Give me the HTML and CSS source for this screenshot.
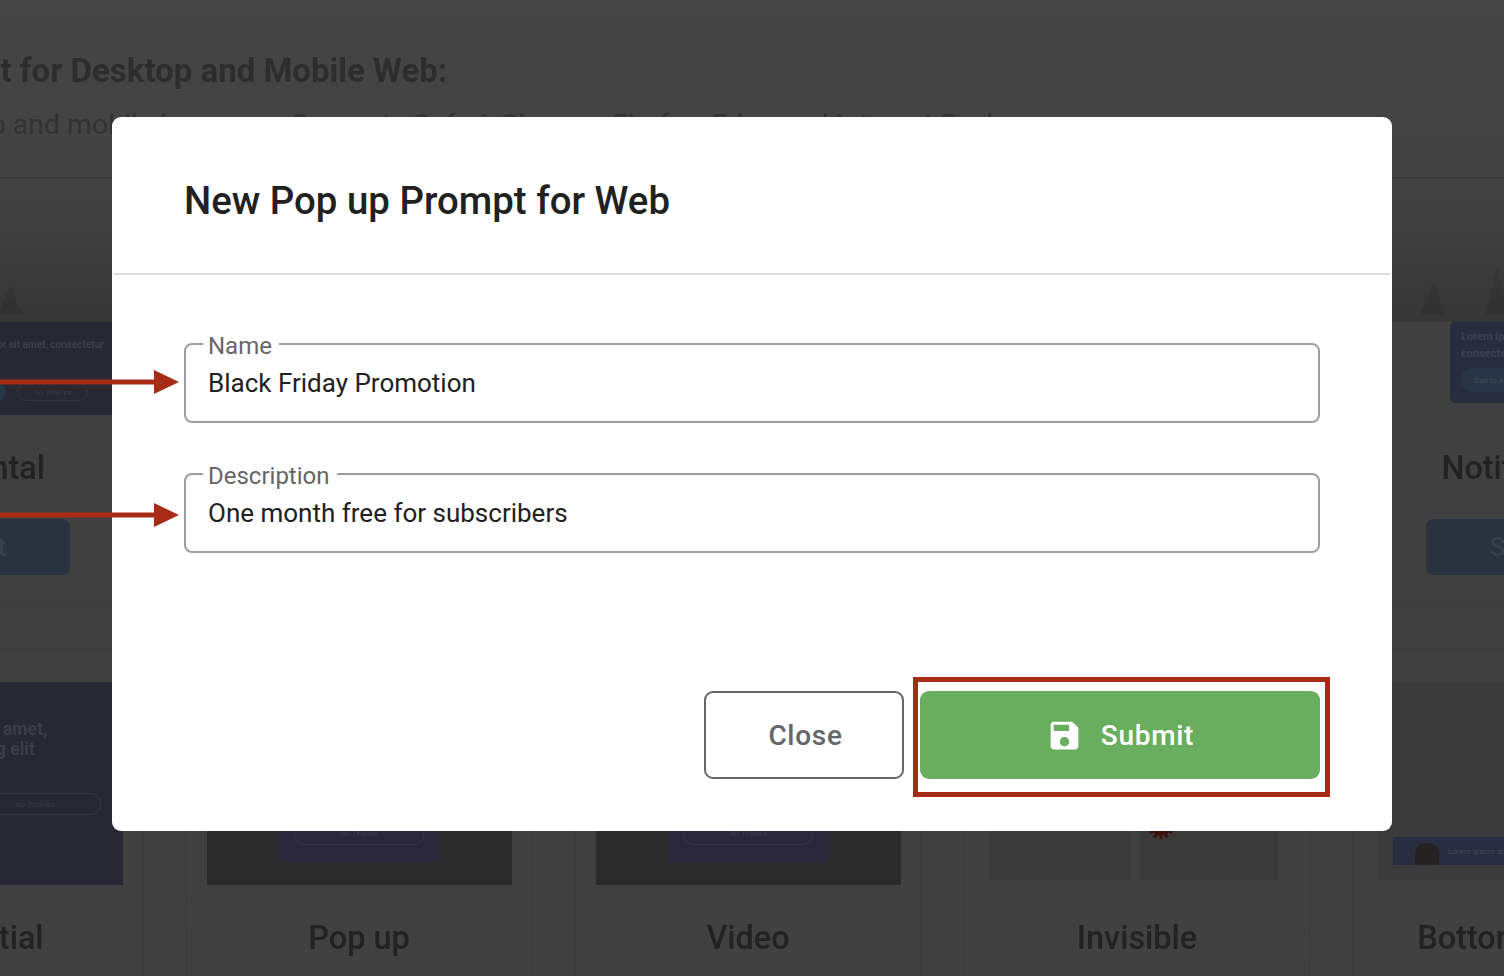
FILE: index.html
```html
<!DOCTYPE html>
<html lang="en">
<head>
<meta charset="utf-8">
<title>New Pop up Prompt for Web</title>
<link rel="stylesheet" href="styles.css">
</head>
<body>
<div class="page">
  <header class="intro">
    <h2 class="intro-title">Support for Desktop and Mobile Web:</h2>
    <p class="intro-sub">Works on desktop and mobile browsers. Supports Safari, Chrome, Firefox, Edge and Internet Explorer</p>
  </header>
  <section class="row row-top">
    <article class="card">
      <div class="scene"><span class="peak peak-a"></span></div>
      <div class="banner">
        <p class="banner-text">Lorem ipsum dolor sit amet, consectetur</p>
        <div class="banner-actions"><span class="pill pill-blue"></span><span class="pill">No Thanks</span></div>
      </div>
      <h3 class="card-title">Horizontal</h3>
      <div class="select-btn"><span>Select</span></div>
    </article>
    <article class="card"><div class="scene"></div></article>
    <article class="card"><div class="scene"></div></article>
    <article class="card"><div class="scene"></div></article>
    <article class="card">
      <div class="scene"><span class="peak peak-b"></span><span class="peak peak-c"></span></div>
      <div class="note">
        <p class="note-text">Lorem ipsum dolor<br>consectetur</p>
        <span class="note-cta">Call to Action</span>
      </div>
      <h3 class="card-title">Notification</h3>
      <div class="select-btn"><span>Select</span></div>
    </article>
  </section>
  <section class="row row-bottom">
    <article class="card">
      <div class="inter">
        <p class="inter-text">Lorem ipsum dolor sit amet,<br>consectetur adipiscing elit</p>
        <div class="inter-actions"><span class="pill pill-blue pill-half"></span><span class="pill pill-half">No Thanks</span></div>
      </div>
      <h3 class="card-title">Interstitial</h3>
    </article>
    <article class="card">
      <div class="dim"><div class="dim-box"><span class="pill pill-mid">No Thanks</span></div></div>
      <h3 class="card-title">Pop up</h3>
    </article>
    <article class="card">
      <div class="dim"><div class="dim-box"><span class="pill pill-mid">No Thanks</span></div></div>
      <h3 class="card-title">Video</h3>
    </article>
    <article class="card">
      <div class="panels"><div class="panel"></div><div class="panel"><span class="gear"></span></div></div>
      <h3 class="card-title">Invisible</h3>
    </article>
    <article class="card">
      <div class="panels panels-single">
        <div class="strip"><span class="person"></span><span class="strip-text">Lorem ipsum dolor sit amet</span></div>
      </div>
      <h3 class="card-title">Bottom Banner</h3>
    </article>
  </section>
</div>

<div class="scrim">
  <div class="modal">
    <h1 class="modal-title">New Pop up Prompt for Web</h1>
    <form class="modal-body">
      <fieldset class="field">
        <legend class="field-label">Name</legend>
        <span class="field-value">Black Friday Promotion</span>
      </fieldset>
      <fieldset class="field">
        <legend class="field-label">Description</legend>
        <span class="field-value">One month free for subscribers</span>
      </fieldset>
    </form>
    <div class="modal-footer">
      <button class="btn btn-close" type="button">Close</button>
      <button class="btn btn-submit" type="button">
        <svg class="save-icon" viewBox="0 0 24 24" aria-hidden="true"><path d="M17 3H5c-1.11 0-2 .9-2 2v14c0 1.1.89 2 2 2h14c1.1 0 2-.9 2-2V7l-4-4zm-5 16c-1.66 0-3-1.34-3-3s1.34-3 3-3 3 1.34 3 3-1.34 3-3 3zm3-10H5V5h10v4z"/></svg>
        <span>Submit</span>
      </button>
    </div>
  </div>
  <svg class="arrow arrow-name" viewBox="0 0 180 26" aria-hidden="true"><rect x="0" y="10.5" width="156" height="5"/><polygon points="154,1 154,25 179,13"/></svg>
  <svg class="arrow arrow-desc" viewBox="0 0 180 26" aria-hidden="true"><rect x="0" y="10.5" width="156" height="5"/><polygon points="154,1 154,25 179,13"/></svg>
</div>
</body>
</html>
```
FILE: styles.css
```css
* { box-sizing: border-box; }
html, body { margin: 0; height: 976px; overflow: hidden; }
body { font-family: Roboto, "Liberation Sans", sans-serif; background: #888; position: relative; }
h1, h2, h3, p { margin: 0; }

.page {
  width: 2200px;
  height: 976px;
  margin-left: -204px;
  filter: blur(0.7px);
  background: linear-gradient(180deg, #8a8a8a 0%, #7e7e7e 60%, #828282 100%);
}
.intro { height: 179px; padding: 51px 0 0 97px; border-bottom: 2px solid #767676; }
.intro-title { font-size: 33px; line-height: 40px; font-weight: 700; color: #5a5a5a; white-space: nowrap; }
.intro-sub { margin-top: 14px; margin-left: -114px; font-size: 28.4px; line-height: 40px; color: #666; white-space: nowrap; }

.row { display: grid; grid-template-columns: repeat(5, 348px); column-gap: 41px; }
.row-top { height: 427px; border-bottom: 2px solid #7a7a7a; }
.row-bottom { margin-top: 42px; border-top: 2px solid #7a7a7a; height: 330px; }
.card { display: flex; flex-direction: column; align-items: center; border-left: 2px solid #7a7a7a; border-right: 2px solid #7a7a7a; position: relative; }
.row-top .card:first-child .banner { align-self: stretch; }

.scene { align-self: stretch; height: 143px; background: linear-gradient(180deg, #888 0%, #6c6c6c 100%); display: flex; align-items: flex-end; gap: 40px; overflow: hidden; padding-bottom: 8px; }
.peak { width: 0; height: 0; border-left: 12px solid transparent; border-right: 12px solid transparent; border-bottom: 28px solid rgba(60, 60, 60, 0.2); }
.peak-a { margin-left: 200px; }
.peak-b { margin-left: 67px; border-bottom-width: 32px; }
.peak-c { border-bottom-width: 46px; }

.banner { height: 93px; background: #4e5068; display: flex; flex-direction: column; align-items: flex-end; padding: 16px 38px 0 0; }
.banner-text { font-size: 10px; line-height: 14px; font-weight: 700; color: #7c7e95; white-space: nowrap; }
.banner-actions { display: flex; gap: 11px; margin-top: 31px; margin-right: 16px; }
.pill { display: flex; align-items: center; justify-content: center; width: 71px; height: 18px; border: 1px solid #6a6b84; border-radius: 10px; font-size: 8px; color: #73748e; white-space: nowrap; }
.pill-blue { background: #4f6b8a; border-color: #4f6b8a; }

.card-title { font-size: 32.4px; line-height: 40px; font-weight: 500; color: #454545; white-space: nowrap; }
.row-top .card-title { margin-top: 33px; }
.row-top .card:last-child .card-title { margin-top: 126px; }
.select-btn { width: 200px; height: 56px; margin-top: 31px; border-radius: 8px; background: #52667e; display: flex; align-items: center; justify-content: center; font-size: 26px; font-weight: 500; color: #6e8095; }

.note { position: absolute; top: 143px; left: 96px; width: 240px; height: 81px; padding: 6px 11px; border-radius: 5px; background: #505a7c; }
.note-text { font-size: 11px; line-height: 17px; font-weight: 700; color: #7782a0; white-space: nowrap; }
.note-cta { display: flex; align-items: center; width: 90px; height: 24px; margin-top: 6px; padding-left: 13px; border-radius: 12px; background: #516b8a; font-size: 8px; font-weight: 500; color: #7a8ca8; }

.inter { margin-top: 32px; width: 306px; height: 203px; background: #4e5068; display: flex; flex-direction: column; align-items: center; padding-top: 37px; }
.inter-text { margin-right: 66px; font-size: 17.5px; line-height: 20px; font-weight: 700; text-align: left; color: #7a7b8f; white-space: nowrap; }
.inter-actions { display: flex; gap: 5px; margin-top: 34px; }
.pill-half { width: 132px; height: 22px; }
.pill-half.pill-blue { width: 125px; }
.row-bottom .card-title { margin-top: 33px; }

.dim { margin-top: 32px; width: 305px; height: 203px; background: #545454; display: flex; justify-content: center; align-items: flex-end; padding-bottom: 23px; }
.dim-box { width: 161px; height: 160px; background: #524e72; border-radius: 4px; display: flex; align-items: flex-end; justify-content: center; padding-bottom: 17px; }
.pill-mid { width: 130px; height: 24px; border-radius: 10px; }

.panels { margin-top: 32px; width: 288px; height: 198px; margin-bottom: 5px; display: flex; gap: 9px; align-self: flex-start; margin-left: 25px; }
.panel { flex: 1; background: #747474; position: relative; }
.gear { position: absolute; bottom: 41px; left: 9px; width: 26px; height: 26px; border-radius: 50%; background: #7a2212; border: 3px dotted #6a1f10; background-clip: padding-box; }
.panels-single { background: #767676; align-items: flex-end; padding: 0 0 15px 15px; margin-left: 24px; width: 330px; overflow: hidden; }
.strip { position: relative; width: 320px; height: 28px; background: #525a80; padding-left: 55px; display: flex; align-items: center; }
.person { position: absolute; left: 22px; bottom: 0; width: 24px; height: 22px; border-radius: 10px 10px 0 0; background: #4c4444; }
.strip-text { font-size: 8px; color: #8b93ab; white-space: nowrap; }

.scrim { position: absolute; inset: 0; background: rgba(0, 0, 0, 0.5); padding-top: 117px; }
.modal { width: 1280px; height: 714px; margin-left: 112px; background: #fff; border-radius: 9px; display: flex; flex-direction: column; }
.modal-title { height: 158px; margin: 0 2px; padding: 61px 71px 0 70px; border-bottom: 2px solid #ddd; font-size: 38.4px; line-height: 46px; font-weight: 500; color: #212121; }
.modal-body { display: flex; flex-direction: column; gap: 35px; padding: 53px 72px 0; }
.field { margin: 0; height: 95px; padding: 0 22px; border: 2px solid #9e9e9e; border-radius: 8px; min-width: 0; }
.field-label { margin-left: -5px; padding: 4px 7px 0 5px; font-size: 24px; line-height: 28px; color: #666; }
.field-value { display: block; margin-top: 8px; font-size: 26px; line-height: 30px; color: #212121; }
.modal-footer { display: flex; justify-content: flex-end; gap: 16px; margin-top: auto; padding: 0 72px 52px; }
.btn { height: 88px; border-radius: 9px; font-family: inherit; font-size: 28px; font-weight: 500; letter-spacing: 0.7px; display: flex; align-items: center; justify-content: center; }
.btn-close { width: 200px; padding-left: 9px; background: #fff; border: 2px solid #666; color: #666; }
.btn-submit { position: relative; width: 400px; background: #69ad5e; border: 0; color: #fff; gap: 18px; }
.btn-submit::after { content: ""; position: absolute; inset: -14px -10px -18px -7px; border: 5px solid #a82c15; }
.save-icon { width: 37px; height: 37px; fill: #fff; }

.arrow { position: absolute; left: 0; width: 180px; height: 26px; fill: #a82c15; }
.arrow-name { top: 369px; }
.arrow-desc { top: 502px; }
```
